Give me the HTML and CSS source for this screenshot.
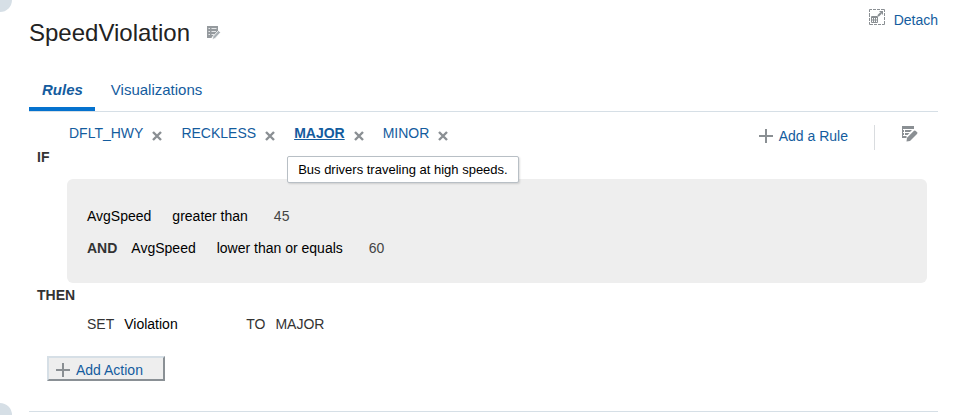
FILE: index.html
```html
<!DOCTYPE html>
<html lang="en">
<head>
<meta charset="utf-8">
<title>SpeedViolation</title>
<link rel="stylesheet" href="styles.css">
</head>
<body>
<svg class="defs" aria-hidden="true">
  <symbol id="cross" viewBox="0 0 10 10"><path d="M1 1L9 9M9 1L1 9" stroke="#8a8f93" stroke-width="2.4" fill="none"/></symbol>
  <symbol id="plus" viewBox="0 0 14 14"><path d="M0 7H14M7 0V14" stroke="#8a8f93" stroke-width="2" fill="none"/></symbol>
  <symbol id="edit" viewBox="0 0 16 16">
    <path d="M0 0H12V3H0ZM0 4H2V6H0ZM3 4H10L8 6H3ZM0 7H2V9H0ZM3 7H7.500L5.500 9H3ZM0 10H4.500V12H0ZM0 0H1V12H0Z" fill="#8a8f93"/>
    <path d="M4.500 15.500L5 11.800L12 4.800Q13 4.200 14 5.200L15 6.200Q15.800 7.200 15 8L8 15Z" fill="#8a8f93"/>
  </symbol>
  <symbol id="edit-name" viewBox="0 0 14 14">
    <path d="M0 0H11V5L5 11L4.500 12H0Z" fill="#959a9e"/>
    <path d="M1.500 2.500H3M4.500 2.500H9.500M1.500 5.500H3M4.500 5.500H9M1.500 8.500H3M4.500 8.500H7" stroke="#e4e6e8"/>
    <path d="M5.500 13.500L6 10.500L11.500 4.500L13.500 6.500L8 12.500Z" fill="#a9b0b5" stroke="#fff" stroke-width=".7"/>
  </symbol>
</svg>
<main class="page">
  <span class="dot dot-top"></span>
  <span class="dot dot-bottom"></span>
  <header class="header">
    <h1>SpeedViolation</h1>
    <button class="icon-button" aria-label="Edit name"><svg width="14" height="14"><use href="#edit-name"/></svg></button>
    <a class="detach" href="#">
      <svg width="16" height="16" viewBox="0 0 16 16" fill="none" stroke="#8a8f93">
        <path d="M.5 3V.5H3M4 .5H7M8 .5H11M12 .5H15.500V3M15.500 4V7M15.500 8V11M15.500 12V15.500H13M12 15.500H9M8 15.500H5M4 15.500H.5V13M.5 12V9M.5 8V4"/>
        <path d="M2.500 7.500H8.500V13.500H2.500ZM2 8.500H9M4.500 9V13M6.500 9V13M3 11H8"/>
        <path d="M9 7L12 4" stroke-width="2"/><path d="M10 2H14V6Z" fill="#8a8f93" stroke="none"/>
      </svg>
      <span>Detach</span>
    </a>
  </header>
  <nav class="tabs">
    <a class="tab active" href="#">Rules</a>
    <a class="tab" href="#">Visualizations</a>
  </nav>
  <div class="toolbar">
    <ul class="rules">
      <li><a href="#">DFLT_HWY</a><button class="icon-button" aria-label="Remove DFLT_HWY"><svg width="10" height="10"><use href="#cross"/></svg></button></li>
      <li><a href="#">RECKLESS</a><button class="icon-button" aria-label="Remove RECKLESS"><svg width="10" height="10"><use href="#cross"/></svg></button></li>
      <li class="current"><a href="#" aria-describedby="tip">MAJOR</a><button class="icon-button" aria-label="Remove MAJOR"><svg width="10" height="10"><use href="#cross"/></svg></button><span class="tooltip" id="tip" role="tooltip">Bus drivers traveling at high speeds.</span></li>
      <li><a href="#">MINOR</a><button class="icon-button" aria-label="Remove MINOR"><svg width="10" height="10"><use href="#cross"/></svg></button></li>
    </ul>
    <div class="tools">
      <button class="add-rule"><svg width="14" height="14"><use href="#plus"/></svg>Add a Rule</button>
      <span class="divider"></span>
      <button class="icon-button" aria-label="Edit rule"><svg width="16" height="16"><use href="#edit"/></svg></button>
    </div>
  </div>
  <section class="rule">
    <h2>IF</h2>
    <div class="conditions">
      <p><span>AvgSpeed</span><span>greater than</span><span class="value">45</span></p>
      <p><b>AND</b><span>AvgSpeed</span><span>lower than or equals</span><span class="value">60</span></p>
    </div>
    <h2>THEN</h2>
    <p class="action"><span>SET</span><span class="field">Violation</span><span>TO</span><span>MAJOR</span></p>
    <button class="add-action"><svg width="14" height="14"><use href="#plus"/></svg>Add Action</button>
  </section>
</main>
</body>
</html>
```
FILE: styles.css
```css
* { box-sizing: border-box; }
body {
  margin: 0;
  background: #fff;
  color: #333;
  font: 14px/16px "Liberation Sans", Arial, sans-serif;
}
h1, h2, p, ul { margin: 0; padding: 0; }
a { color: #145c9e; text-decoration: none; }
button { font: inherit; color: #145c9e; cursor: pointer; }
svg { display: block; flex: none; }
.defs { position: absolute; width: 0; height: 0; }
.page {
  position: relative;
  overflow: hidden;
  padding: 8px 18px 3px 29px;
}
.dot {
  position: absolute;
  left: -12px;
  width: 24px;
  height: 24px;
  border-radius: 50%;
  background: #d6dfe6;
}
.dot-top { top: -12px; }
.dot-bottom { bottom: -12px; }
.icon-button { padding: 0; border: 0; background: none; }
.header { display: flex; align-items: center; height: 50px; gap: 17px; }
h1 { font-size: 24px; line-height: 28px; font-weight: 400; color: #222; }
.detach {
  display: flex;
  align-self: flex-start;
  gap: 9px;
  margin-left: auto;
}
.detach svg { margin-top: 1px; }
.detach span { margin-top: 4px; }
.tabs {
  display: flex;
  margin-top: 12px;
  border-bottom: 1px solid #d6dfe6;
  font-size: 15px;
}
.tab {
  padding: 12px 12px 9px 13px;
  margin-right: 3px;
  border-bottom: 4px solid transparent;
}
.active {
  border-color: #0572ce;
  font-weight: 700;
  font-style: italic;
}
.toolbar {
  display: flex;
  justify-content: space-between;
  height: 37px;
  padding: 12px 20px 0 40px;
}
.rules { display: flex; gap: 19px; list-style: none; padding-top: 1px; }
.rules li { display: flex; align-items: flex-start; gap: 9px; position: relative; }
.rules .icon-button { margin-top: 6px; }
.current > a { font-weight: 700; text-decoration: underline; }
.tooltip {
  position: absolute;
  top: 31px;
  left: -7px;
  z-index: 1;
  padding: 5px 10px;
  border: 1px solid #b8bfc5;
  border-radius: 2px;
  background: #fff;
  box-shadow: 1px 1px 2px #0002;
  color: #000;
  font-size: 13px;
  line-height: 15px;
  white-space: nowrap;
}
.tools { display: flex; align-items: flex-start; }
.add-rule {
  display: flex;
  align-items: center;
  gap: 6px;
  padding: 4px 0;
  border: 0;
  background: none;
}
.divider { width: 1px; height: 25px; margin: 1px 27px 0 26px; background: #d9dcdf; }
.tools .icon-button { margin-top: 2px; }
h2 { padding-left: 8px; font-size: 14px; line-height: 16px; }
.conditions {
  display: grid;
  gap: 16px;
  margin: 14px 11px 4px 38px;
  padding: 29px 20px 27px;
  border-radius: 6px;
  background: #eee;
}
.conditions p { display: flex; gap: 21px; color: #000; }
.conditions b { color: #333; margin-right: -7px; }
.conditions .value { margin-left: 5px; color: #444; }
.action { display: flex; gap: 10px; margin: 13px 0 24px 58px; }
.field { width: 112px; color: #000; }
.add-action {
  display: flex;
  align-items: center;
  gap: 6px;
  height: 25px;
  margin: 0 0 30px 18px;
  padding: 2px 20px 0 7px;
  border: 2px solid;
  border-color: #d6dfe6 #8a9095 #8a9095 #d6dfe6;
  background: #eee;
}
.rule { border-bottom: 1px solid #d6dfe6; }
```
